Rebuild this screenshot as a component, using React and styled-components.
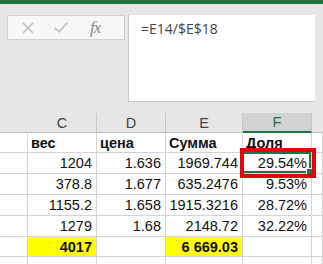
import React from "react";
import styled, { createGlobalStyle } from "styled-components";

const GlobalStyle = createGlobalStyle`
  html, body {
    margin: 0;
    padding: 0;
    background: #e6e6e6;
    overflow: hidden;
  }
  body {
    font-family: "Liberation Sans", Arial, sans-serif;
  }
`;

const Page = styled.div`
  width: 323px;
  height: 264px;
  overflow: hidden;
  background: #e6e6e6;
`;

const TitleStrip = styled.div`
  height: 4px;
  background: #217346;
`;

const FormulaRow = styled.div`
  display: flex;
  align-items: flex-start;
  padding: 11px 0 0 7px;
  height: 98px;
  box-sizing: border-box;
`;

const ToolBox = styled.div`
  width: 118px;
  height: 25px;
  box-sizing: border-box;
  border: 1px solid #d2d2d2;
  background: #f7f7f7;
  display: flex;
  align-items: center;
  padding-left: 14px;
  gap: 20px;
  color: #b4b4b4;
`;

const Fx = styled.span`
  font-family: "Liberation Serif", "Times New Roman", serif;
  font-style: italic;
  font-size: 17px;
  color: #8a8a8a;
  margin-left: 2px;
  letter-spacing: -1px;
`;

const FormulaInput = styled.div`
  margin-left: 3px;
  width: 187px;
  height: 87px;
  box-sizing: border-box;
  background: #fff;
  border-left: 1px solid #c8c8c8;
  border-bottom: 1px solid #c8c8c8;
  padding: 4px 0 0 12px;
  font-family: "Open Sans", "Noto Sans", sans-serif;
  font-size: 14px;
  color: #444;
`;

const Sheet = styled.div`
  margin-top: 11px;
  display: grid;
  grid-template-columns: 28px 69px 69px 77px 69px 11px;
  grid-template-rows: 20px 20px 21px 21px 21px 21px 20px 20px;
  font-family: "Liberation Sans", Arial, sans-serif;
`;

const ColHead = styled.div`
  box-sizing: border-box;
  background: ${(p) => (p.$active ? "#d2d2d2" : "#e6e6e6")};
  border-right: 1px solid ${(p) => (p.$first ? "#e6e6e6" : "#c6c6c6")};
  border-bottom: ${(p) => (p.$active ? "2px solid #217346" : "1px solid #bdbdbd")};
  display: flex;
  align-items: center;
  justify-content: center;
  font-size: 14.5px;
  color: ${(p) => (p.$active ? "#217346" : "#444")};
`;

const Cell = styled.div`
  position: relative;
  z-index: ${(p) => (p.$raised ? 2 : "auto")};
  box-sizing: border-box;
  background: ${(p) => (p.$fill ? "#ffff00" : "#fff")};
  border-right: 1px solid #d4d4d4;
  border-bottom: 1px solid #d4d4d4;
  display: flex;
  align-items: center;
  justify-content: ${(p) => (p.$left ? "flex-start" : "flex-end")};
  padding: 0 4px 0 3px;
  font-size: 14.5px;
  font-weight: ${(p) => (p.$bold ? 700 : 400)};
  color: #111;
  white-space: nowrap;
`;

const Selection = styled.div`
  position: absolute;
  inset: -1px 0 0 -1px;
  border: 2px solid #217346;
  pointer-events: none;

  &::after {
    content: "";
    position: absolute;
    right: -4px;
    bottom: -4px;
    width: 5px;
    height: 5px;
    background: #217346;
    border: 1px solid #fff;
  }
`;

const RedFrame = styled.div`
  position: absolute;
  left: -3px;
  right: -5px;
  top: -5px;
  bottom: -5px;
  border: 4px solid #e5000b;
  pointer-events: none;
`;

const CrossIcon = () => (
  <svg width="12" height="12" viewBox="0 0 12 12">
    <path d="M1 1 L11 11 M11 1 L1 11" stroke="#b9b9b9" strokeWidth="1.4" fill="none" />
  </svg>
);

const CheckIcon = () => (
  <svg width="14" height="12" viewBox="0 0 14 12">
    <path d="M1 6 L5 10 L13 1" stroke="#b9b9b9" strokeWidth="1.5" fill="none" />
  </svg>
);

const rows = [
  ["вес", "цена", "Сумма", "Доля"],
  ["1204", "1.636", "1969.744", "29.54%"],
  ["378.8", "1.677", "635.2476", "9.53%"],
  ["1155.2", "1.658", "1915.3216", "28.72%"],
  ["1279", "1.68", "2148.72", "32.22%"],
];

export default function App() {
  return (
    <Page>
      <GlobalStyle />
      <TitleStrip />
      <FormulaRow>
        <ToolBox>
          <CrossIcon />
          <CheckIcon />
          <Fx>fx</Fx>
        </ToolBox>
        <FormulaInput>=E14/$E$18</FormulaInput>
      </FormulaRow>
      <Sheet>
        <ColHead $first />
        <ColHead>C</ColHead>
        <ColHead>D</ColHead>
        <ColHead>E</ColHead>
        <ColHead $active>F</ColHead>
        <ColHead $first />

        {rows.map((r, i) => {
          return (
            <React.Fragment key={i}>
              <Cell />
              {r.map((v, j) => {
                const picked = i === 1 && j === 3;
                return (
                  <Cell key={j} $left={i === 0} $bold={i === 0} $raised={picked}>
                    {v}
                    {picked && (
                      <>
                        <Selection />
                        <RedFrame />
                      </>
                    )}
                  </Cell>
                );
              })}
              <Cell />
            </React.Fragment>
          );
        })}

        <Cell />
        <Cell $fill $bold>4017</Cell>
        <Cell />
        <Cell $fill $bold>6 669.03</Cell>
        <Cell />
        <Cell />

        <Cell />
        <Cell />
        <Cell />
        <Cell />
        <Cell />
        <Cell />
      </Sheet>
    </Page>
  );
}
